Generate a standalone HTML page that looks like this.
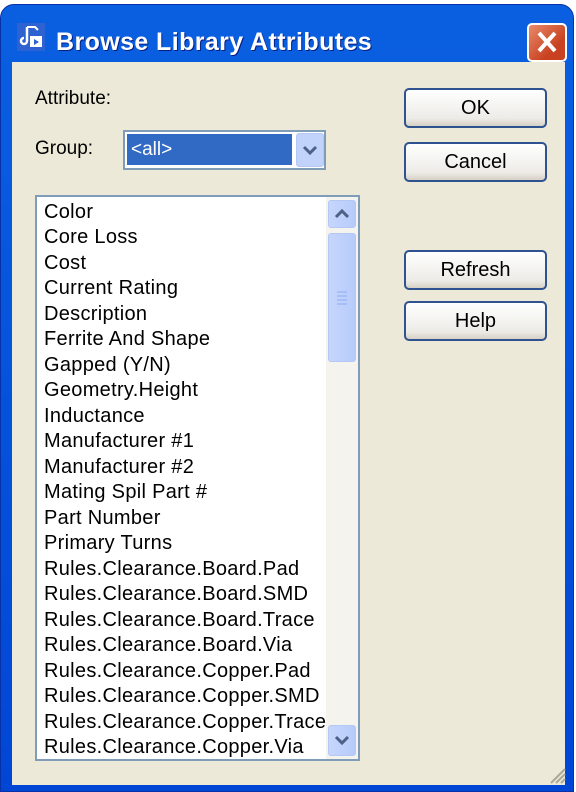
<!DOCTYPE html>
<html><head><style>
*{margin:0;padding:0;box-sizing:border-box}
body{width:576px;height:792px;background:#fff;position:relative;overflow:hidden;font-family:"Liberation Sans",sans-serif}
.win{position:absolute;left:0;top:4px;width:574px;height:788px;background:linear-gradient(#0a5fe0,#0046d5);border-radius:14px 14px 0 0;border:1px solid #0831a8}
.client{position:absolute;left:12px;top:62px;width:553px;height:723px;background:#ece9d8}
.title{position:absolute;left:55px;top:23px;color:#fff;font-weight:bold;font-size:25px;letter-spacing:0.4px;text-shadow:1px 1px #0a1e80}
.close{position:absolute;left:526px;top:18px;width:40px;height:39px;border:2px solid #fff;border-radius:5px;background:linear-gradient(135deg,#e88a6a,#c84120 70%);}
.btn{position:absolute;left:404px;width:143px;height:40px;border:2px solid #2f5290;border-radius:5px;background:linear-gradient(#fff,#ecebe6 80%,#d6d0c5);font-size:20px;text-align:center;line-height:36px;color:#000}
.lbl{position:absolute;font-size:19px;color:#000}
.list{position:absolute;left:35px;top:195px;width:325px;height:566px;background:#fff;border:2px solid #7f9db9;overflow:hidden}
.it{position:absolute;left:7px;font-size:20px;letter-spacing:0.3px;white-space:nowrap;line-height:25px}
.sb{position:absolute;left:289px;top:0;width:32px;height:562px;background:#f4f3ee}
.sbb{position:absolute;left:2px;width:28px;border:1px solid #b4c8f6;border-radius:3px;background:linear-gradient(90deg,#c6d6fc,#b7cbfb)}
</style></head><body>
<div class="win">
<svg style="position:absolute;left:16px;top:18px" width="28" height="28"><rect width="28" height="28" fill="#2e62d0"/><path d="M10 4v14a3 3 0 1 1-3-3" stroke="#fff" stroke-width="2.5" fill="none"/><path d="M10 4h8l3 3" stroke="#fff" stroke-width="2" fill="none"/><rect x="13" y="13" width="12" height="11" fill="#fff"/><path d="M17 16l5 3-5 3z" fill="#2e62d0"/></svg>
<div class="title">Browse Library Attributes</div>
<div class="close"><svg width="36" height="35"><path d="M10 8l16 18M26 8L10 26" stroke="#fff" stroke-width="4"/></svg></div>
</div>
<div class="client"></div>
<div class="lbl" style="left:35px;top:88px">Attribute:</div>
<div class="lbl" style="left:35px;top:138px">Group:</div>
<div style="position:absolute;left:123px;top:130px;width:203px;height:40px;background:#fff;border:2px solid #7f9db9"></div>
<div style="position:absolute;left:127px;top:134px;width:165px;height:31px;background:#316ac5;color:#fff;font-size:19px;line-height:31px;padding-left:4px">&lt;all&gt;</div>
<div style="position:absolute;left:296px;top:133px;width:28px;height:34px;border-radius:3px;background:#c1d3fb;border:1px solid #b4c8f6"><svg width="26" height="32"><path d="M7 13l6 6 6-6" stroke="#4d6185" stroke-width="3" fill="none"/></svg></div>
<div class="list">
<div class="it" style="top:3px">Color</div><div class="it" style="top:28px">Core Loss</div><div class="it" style="top:54px">Cost</div><div class="it" style="top:79px">Current Rating</div><div class="it" style="top:105px">Description</div><div class="it" style="top:130px">Ferrite And Shape</div><div class="it" style="top:156px">Gapped (Y/N)</div><div class="it" style="top:181px">Geometry.Height</div><div class="it" style="top:207px">Inductance</div><div class="it" style="top:232px">Manufacturer #1</div><div class="it" style="top:258px">Manufacturer #2</div><div class="it" style="top:283px">Mating Spil Part #</div><div class="it" style="top:309px">Part Number</div><div class="it" style="top:334px">Primary Turns</div><div class="it" style="top:360px">Rules.Clearance.Board.Pad</div><div class="it" style="top:385px">Rules.Clearance.Board.SMD</div><div class="it" style="top:411px">Rules.Clearance.Board.Trace</div><div class="it" style="top:436px">Rules.Clearance.Board.Via</div><div class="it" style="top:462px">Rules.Clearance.Copper.Pad</div><div class="it" style="top:487px">Rules.Clearance.Copper.SMD</div><div class="it" style="top:513px">Rules.Clearance.Copper.Trace</div><div class="it" style="top:538px">Rules.Clearance.Copper.Via</div>
<div class="sb">
<div class="sbb" style="top:3px;height:28px"><svg width="26" height="26"><path d="M7 16l6-6 6 6" stroke="#4d6185" stroke-width="3" fill="none"/></svg></div>
<div class="sbb" style="top:36px;height:129px"><svg width="26" height="127"><path d="M8 58h10M8 62h10M8 66h10M8 70h10" stroke="#8faaf0"/></svg></div>
<div class="sbb" style="top:528px;height:31px"><svg width="26" height="29"><path d="M7 11l6 6 6-6" stroke="#4d6185" stroke-width="3" fill="none"/></svg></div>
</div>
</div>
<div class="btn" style="top:88px">OK</div>
<div class="btn" style="top:142px">Cancel</div>
<div class="btn" style="top:250px">Refresh</div>
<div class="btn" style="top:301px">Help</div>
<svg style="position:absolute;left:548px;top:766px" width="18" height="18"><path d="M17 3L3 17M17 8L8 17M17 13L13 17" stroke="#aca899" stroke-width="2"/></svg>
</body></html>
